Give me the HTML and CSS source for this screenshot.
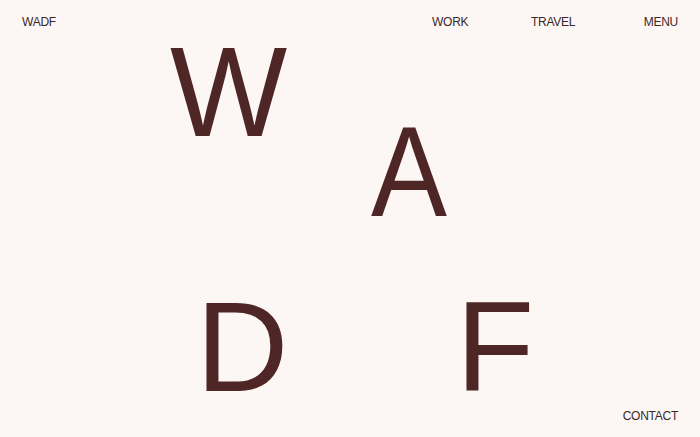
FILE: index.html
```html
<!DOCTYPE html>
<html lang="en">
<head>
<meta charset="utf-8">
<title>WADF</title>
<link rel="stylesheet" href="styles.css">
</head>
<body>
<div class="page">
  <header class="header">
    <a class="logo" href="#">WADF</a>
    <nav class="nav">
      <a href="#">WORK</a>
      <a href="#">TRAVEL</a>
      <a class="nav-menu" href="#">MENU</a>
    </nav>
  </header>
  <main class="canvas">
    <span class="glyph glyph-w">W</span>
    <span class="glyph glyph-a">A</span>
    <span class="glyph glyph-d">D</span>
    <span class="glyph glyph-f">F</span>
  </main>
  <footer class="footer">
    <a href="#">CONTACT</a>
  </footer>
</div>
</body>
</html>
```
FILE: styles.css
```css
html, body {
  margin: 0;
  padding: 0;
}
body {
  background: #fcf7f4;
  font-family: "Liberation Sans", Arial, sans-serif;
  color: #3b2727;
}
a {
  color: inherit;
  text-decoration: none;
}
.page {
  position: relative;
  width: 700px;
  height: 437px;
  overflow: hidden;
  display: flex;
  flex-direction: column;
}
.header {
  display: flex;
  justify-content: space-between;
  align-items: center;
  padding: 15px 22px 0 22px;
  font-size: 12px;
  line-height: 15px;
  letter-spacing: -0.25px;
  position: relative;
  z-index: 2;
}
.nav {
  display: grid;
  grid-template-columns: 99px 1fr auto;
  width: 246px;
}
.nav-menu {
  justify-self: end;
}
.canvas {
  position: relative;
  flex: 1;
}
.glyph {
  position: absolute;
  font-size: 128px;
  line-height: 128px;
  color: #4f2626;
  display: inline-block;
}
.glyph-w {
  left: 170px;
  top: -2px;
  transform: scaleX(0.97);
  transform-origin: left center;
}
.glyph-a {
  left: 371px;
  top: 78px;
  transform: scaleX(0.89);
  transform-origin: left center;
}
.glyph-d {
  left: 196px;
  top: 253px;
}
.glyph-f {
  left: 456px;
  top: 253px;
}
.footer {
  display: flex;
  justify-content: flex-end;
  padding: 0 22px 13px 22px;
  font-size: 12px;
  line-height: 15px;
  letter-spacing: -0.25px;
}
```
